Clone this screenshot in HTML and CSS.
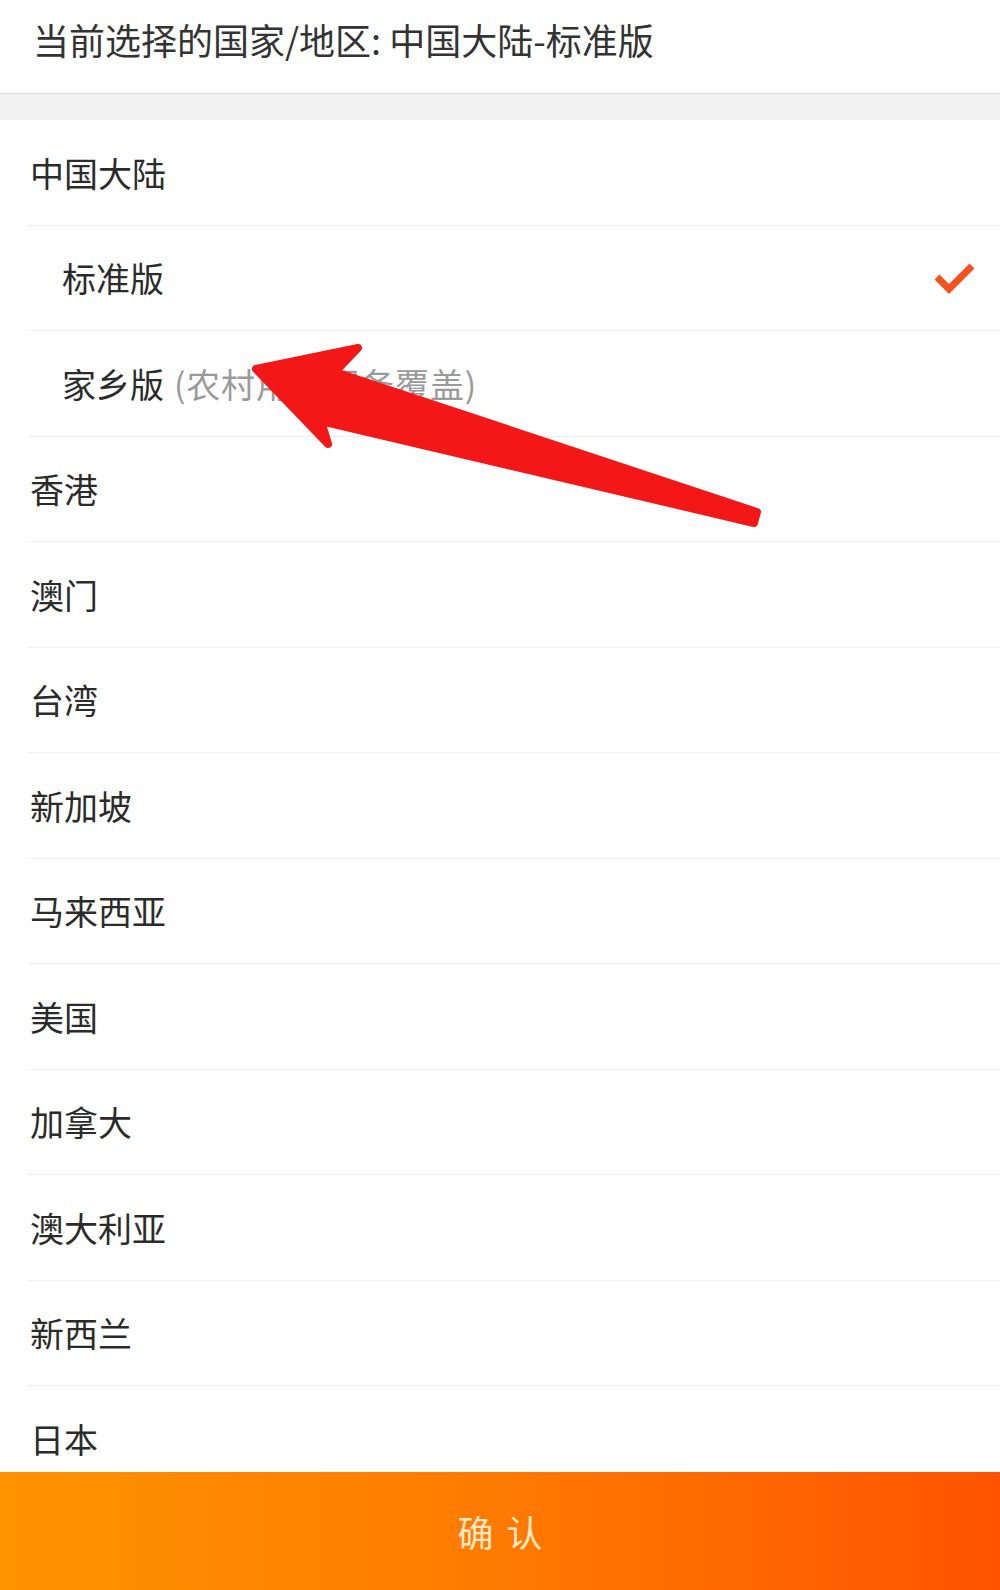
FILE: index.html
```html
<!DOCTYPE html>
<html lang="zh-CN">
<head>
<meta charset="utf-8">
<title>选择国家/地区</title>
<link rel="stylesheet" href="styles.css">
</head>
<body>
<div class="page">
  <header class="current">当前选择的国家/地区: 中国大陆-标准版</header>
  <div class="band"></div>
  <ul class="list">
    <li class="row">中国大陆</li>
    <li class="row sub selected">标准版
      <svg class="check" width="44" height="34" viewBox="0 0 44 34"><path d="M5 15 L17 27 L40 4" fill="none" stroke="#f4521d" stroke-width="7"/></svg>
    </li>
    <li class="row sub">家乡版<span class="note">(农村用户服务覆盖)</span></li>
    <li class="row">香港</li>
    <li class="row">澳门</li>
    <li class="row">台湾</li>
    <li class="row">新加坡</li>
    <li class="row">马来西亚</li>
    <li class="row">美国</li>
    <li class="row">加拿大</li>
    <li class="row">澳大利亚</li>
    <li class="row">新西兰</li>
    <li class="row">日本</li>
  </ul>
  <footer class="confirm">确认</footer>
  <svg class="arrow" width="1000" height="1590" viewBox="0 0 1000 1590">
    <path d="M256 369 L358 348 L335 372 L757 512 L754 523 L321 421 L328 444 Z" fill="#f31717" stroke="#f31717" stroke-width="8" stroke-linejoin="round"/>
  </svg>
</div>
</body>
</html>
```
FILE: styles.css
```css
* { box-sizing: border-box; }
html, body { margin: 0; padding: 0; }
body {
  background: #ffffff;
  font-family: "Noto Sans CJK SC", "Noto Sans", sans-serif;
  color: #2e2e2e;
}
.page {
  position: relative;
  width: 1000px;
  height: 1590px;
  display: flex;
  flex-direction: column;
  overflow: hidden;
}
.current {
  height: 94px;
  flex: none;
  display: flex;
  align-items: center;
  padding: 0 0 15px 33px;
  font-size: 36px;
  color: #333333;
  border-bottom: 1px solid #d8d8d8;
}
.band {
  height: 26px;
  flex: none;
  background: #f2f2f2;
}
.list {
  list-style: none;
  margin: 0;
  padding: 0;
  flex: 1;
  overflow: hidden;
}
.row {
  height: 105.5px;
  margin-left: 28px;
  padding: 0 24px 0 2px;
  display: flex;
  align-items: center;
  font-size: 34px;
  color: #2b2b2b;
  border-bottom: 1px solid #efefef;
}
.row.sub { padding-left: 34px; }
.note {
  color: #9a9a9a;
  margin-left: 10px;
  letter-spacing: 0.8px;
}
.check { margin-left: auto; margin-top: 2px; }
.confirm {
  height: 118px;
  flex: none;
  display: flex;
  align-items: center;
  justify-content: center;
  font-size: 36px;
  letter-spacing: 13px;
  text-indent: 13px;
  color: #fce8c6;
  background: linear-gradient(90deg, #ff9300 0%, #ff7a00 50%, #ff5300 100%);
}
.arrow {
  position: absolute;
  left: 0;
  top: 0;
  pointer-events: none;
}
```
